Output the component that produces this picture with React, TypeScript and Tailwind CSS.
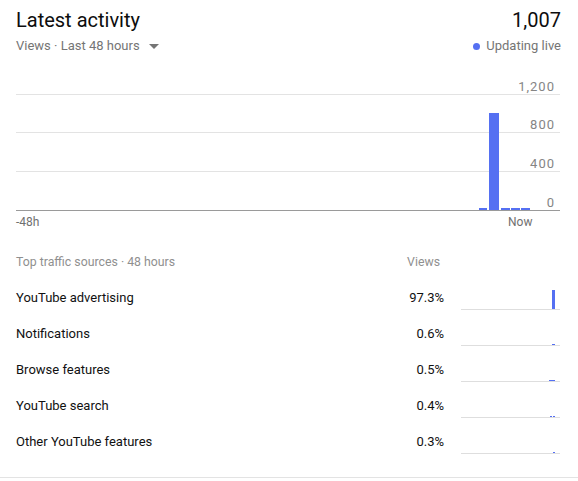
import React from 'react';

const BLUE = '#5570f2';

const SOURCES = [
  { name: 'YouTube advertising', pct: '97.3%', bars: [{ w: 3, h: 19 }] },
  { name: 'Notifications', pct: '0.6%', bars: [{ w: 3, h: 1 }] },
  { name: 'Browse features', pct: '0.5%', bars: [{ w: 6, h: 1 }] },
  { name: 'YouTube search', pct: '0.4%', bars: [{ w: 2, h: 1 }, { w: 2, h: 1 }] },
  { name: 'Other YouTube features', pct: '0.3%', bars: [{ w: 2, h: 1 }] },
];

// hourly bars near "Now": [x, width, height]
const CHART_BARS: [number, number, number][] = [
  [479, 8, 2],
  [489, 10, 97],
  [501, 9, 2],
  [511, 9, 2],
  [521, 9, 2],
];

const GRID = [
  { y: 34.5, label: '1,200' },
  { y: 72.5, label: '800' },
  { y: 111.5, label: '400' },
];

function ActivityChart() {
  return (
    <svg width={578} height={172} className="block mt-[4px]" style={{ fontFamily: 'Roboto, sans-serif' }}>
      {GRID.map((g) => (
        <g key={g.label}>
          <line x1={16} x2={560} y1={g.y} y2={g.y} stroke="#e3e3e3" strokeWidth={1} />
          <text x={555} y={g.y - 3.5} textAnchor="end" fontSize={13} letterSpacing={1} fill="#858585">
            {g.label}
          </text>
        </g>
      ))}
      <text x={555} y={147} textAnchor="end" fontSize={13} letterSpacing={1} fill="#858585">
        0
      </text>
      {CHART_BARS.map(([x, w, h], i) => (
        <rect key={i} x={x} y={150 - h} width={w} height={h} fill={BLUE} />
      ))}
      <line x1={16} x2={560} y1={150.5} y2={150.5} stroke="#9a9a9a" strokeWidth={1} />
      <text x={16} y={166} fontSize={12} fill="#707070">
        -48h
      </text>
      <text x={508} y={166} fontSize={12} fill="#707070">
        Now
      </text>
    </svg>
  );
}

export default function App() {
  return (
    <div className="w-[578px] h-[481px] bg-white" style={{ fontFamily: 'Roboto, "Noto Sans", sans-serif' }}>
      <div className="pt-[6px] pl-4 pr-[17px]">
        <div className="flex items-center justify-between h-[28px] text-[20px] leading-[28px] text-[#0d0d0d]">
          <span>Latest activity</span>
          <span>1,007</span>
        </div>
        <div className="flex items-center justify-between mt-[2px] h-[20px] text-[13px] leading-[20px] text-[#757575]">
          <div className="flex items-center">
            <span>Views · Last 48 hours</span>
            <svg width={10} height={5} className="ml-[9px]" viewBox="0 0 10 5">
              <polygon points="0,0 10,0 5,5" fill="#757575" />
            </svg>
          </div>
          <div className="flex items-center gap-[6px]">
            <span className="w-[7px] h-[7px] rounded-full" style={{ backgroundColor: BLUE }} />
            <span>Updating live</span>
          </div>
        </div>
      </div>

      <ActivityChart />

      <div className="border-b border-[#e3e3e3] pb-[17px]">
        <div className="flex items-center mt-[22px] pl-4 pr-[18px] h-[16px] text-[12.3px] leading-[16px] text-[#8f8f8f]">
          <span className="flex-1">Top traffic sources · 48 hours</span>
          <span className="mr-[120px]">Views</span>
        </div>
        <div className="mt-[10px]">
          {SOURCES.map((s) => (
            <div key={s.name} className="flex h-[36px] pl-4 pr-[18px] text-[13px] leading-[36px] text-[#111111]">
              <span className="flex-1">{s.name}</span>
              <span className="text-right">{s.pct}</span>
              <div className="w-[99px] ml-[17px] flex flex-col justify-end pb-[6px]">
                <div className="flex items-end justify-end gap-[1px] pr-[5px]">
                  {s.bars.map((b, i) => (
                    <div key={i} style={{ width: b.w, height: b.h, backgroundColor: BLUE }} />
                  ))}
                </div>
                <div className="h-px bg-[#dedede]" />
              </div>
            </div>
          ))}
        </div>
      </div>
    </div>
  );
}
